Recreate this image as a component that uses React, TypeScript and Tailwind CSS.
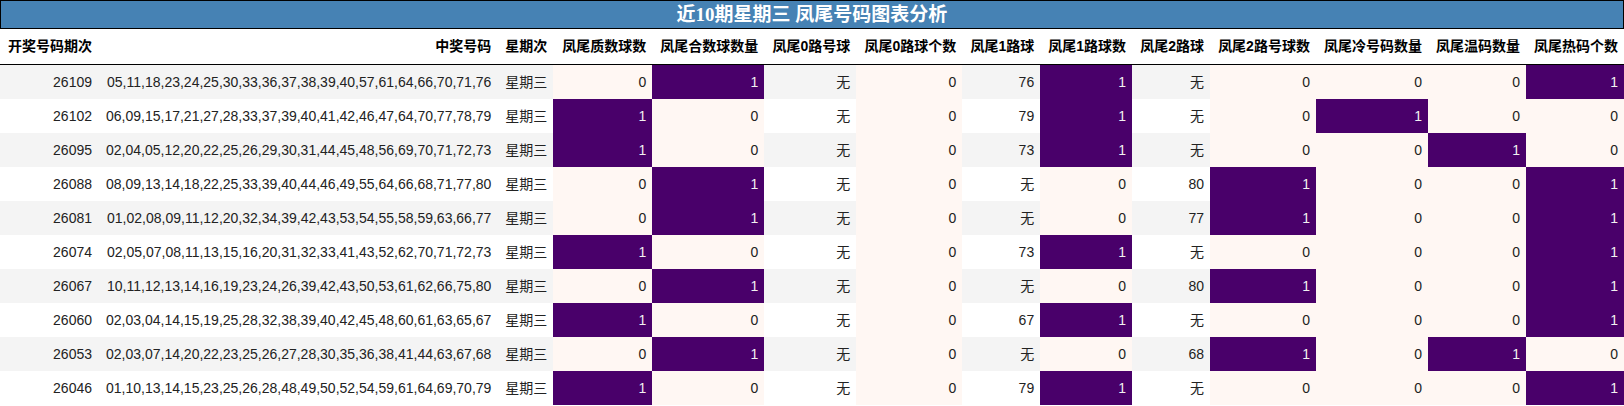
type Kind = 'plain' | 'grad'

type Column = { title: string; width: string; kind: Kind }

const COLUMNS: Column[] = [
  { title: '开奖号码期次', width: 'w-[98px]', kind: 'plain' },
  { title: '中奖号码', width: 'w-[399px]', kind: 'plain' },
  { title: '星期次', width: 'w-[56px]', kind: 'plain' },
  { title: '凤尾质数球数', width: 'w-[99px]', kind: 'grad' },
  { title: '凤尾合数球数量', width: 'w-[112px]', kind: 'grad' },
  { title: '凤尾0路号球', width: 'w-[92px]', kind: 'plain' },
  { title: '凤尾0路球个数', width: 'w-[106px]', kind: 'grad' },
  { title: '凤尾1路球', width: 'w-[78px]', kind: 'plain' },
  { title: '凤尾1路球数', width: 'w-[91px]', kind: 'grad' },
  { title: '凤尾2路球', width: 'w-[78px]', kind: 'plain' },
  { title: '凤尾2路号球数', width: 'w-[106px]', kind: 'grad' },
  { title: '凤尾冷号码数量', width: 'w-[112px]', kind: 'grad' },
  { title: '凤尾温码数量', width: 'w-[98px]', kind: 'grad' },
  { title: '凤尾热码个数', width: 'w-[98px]', kind: 'grad' },
]

const ROWS: string[][] = [
  ['26109', '05,11,18,23,24,25,30,33,36,37,38,39,40,57,61,64,66,70,71,76', '星期三', '0', '1', '无', '0', '76', '1', '无', '0', '0', '0', '1'],
  ['26102', '06,09,15,17,21,27,28,33,37,39,40,41,42,46,47,64,70,77,78,79', '星期三', '1', '0', '无', '0', '79', '1', '无', '0', '1', '0', '0'],
  ['26095', '02,04,05,12,20,22,25,26,29,30,31,44,45,48,56,69,70,71,72,73', '星期三', '1', '0', '无', '0', '73', '1', '无', '0', '0', '1', '0'],
  ['26088', '08,09,13,14,18,22,25,33,39,40,44,46,49,55,64,66,68,71,77,80', '星期三', '0', '1', '无', '0', '无', '0', '80', '1', '0', '0', '1'],
  ['26081', '01,02,08,09,11,12,20,32,34,39,42,43,53,54,55,58,59,63,66,77', '星期三', '0', '1', '无', '0', '无', '0', '77', '1', '0', '0', '1'],
  ['26074', '02,05,07,08,11,13,15,16,20,31,32,33,41,43,52,62,70,71,72,73', '星期三', '1', '0', '无', '0', '73', '1', '无', '0', '0', '0', '1'],
  ['26067', '10,11,12,13,14,16,19,23,24,26,39,42,43,50,53,61,62,66,75,80', '星期三', '0', '1', '无', '0', '无', '0', '80', '1', '0', '0', '1'],
  ['26060', '02,03,04,14,15,19,25,28,32,38,39,40,42,45,48,60,61,63,65,67', '星期三', '1', '0', '无', '0', '67', '1', '无', '0', '0', '0', '1'],
  ['26053', '02,03,07,14,20,22,23,25,26,27,28,30,35,36,38,41,44,63,67,68', '星期三', '0', '1', '无', '0', '无', '0', '68', '1', '0', '1', '0'],
  ['26046', '01,10,13,14,15,23,25,26,28,48,49,50,52,54,59,61,64,69,70,79', '星期三', '1', '0', '无', '0', '79', '1', '无', '0', '0', '0', '1'],
]

function cellClass(kind: Kind, value: string, rowIndex: number) {
  if (kind === 'grad') {
    return value === '1' ? 'bg-[#49006a] text-[#f1f1f1]' : 'bg-[#fff7f3] text-[#222]'
  }
  return rowIndex % 2 === 0 ? 'bg-[#f4f4f4] text-[#222]' : 'bg-white text-[#222]'
}

export default function App() {
  return (
    <div className="w-[1624px] bg-white font-['Liberation_Sans','Noto_Sans_CJK_SC',sans-serif]">
      <div className="h-[29px] border border-black bg-[#4682b4] flex items-center justify-center">
        <span className="text-[19px] font-bold text-white leading-none font-['Liberation_Serif','Noto_Sans_CJK_SC',serif]">
          近10期星期三 凤尾号码图表分析
        </span>
      </div>
      <table className="table-fixed border-separate border-spacing-0 text-[14px]">
        <thead>
          <tr>
            {COLUMNS.map((c) => (
              <th
                key={c.title}
                className={`${c.width} h-[36px] pl-2 pr-1.5 text-right font-bold text-black whitespace-nowrap border-b border-black`}
              >
                {c.title}
              </th>
            ))}
          </tr>
        </thead>
        <tbody>
          {ROWS.map((row, ri) => (
            <tr key={row[0]}>
              {row.map((value, ci) => (
                <td
                  key={ci}
                  className={`h-[34px] pl-2 pr-1.5 text-right whitespace-nowrap ${cellClass(COLUMNS[ci].kind, value, ri)}`}
                >
                  {value}
                </td>
              ))}
            </tr>
          ))}
        </tbody>
      </table>
    </div>
  )
}
